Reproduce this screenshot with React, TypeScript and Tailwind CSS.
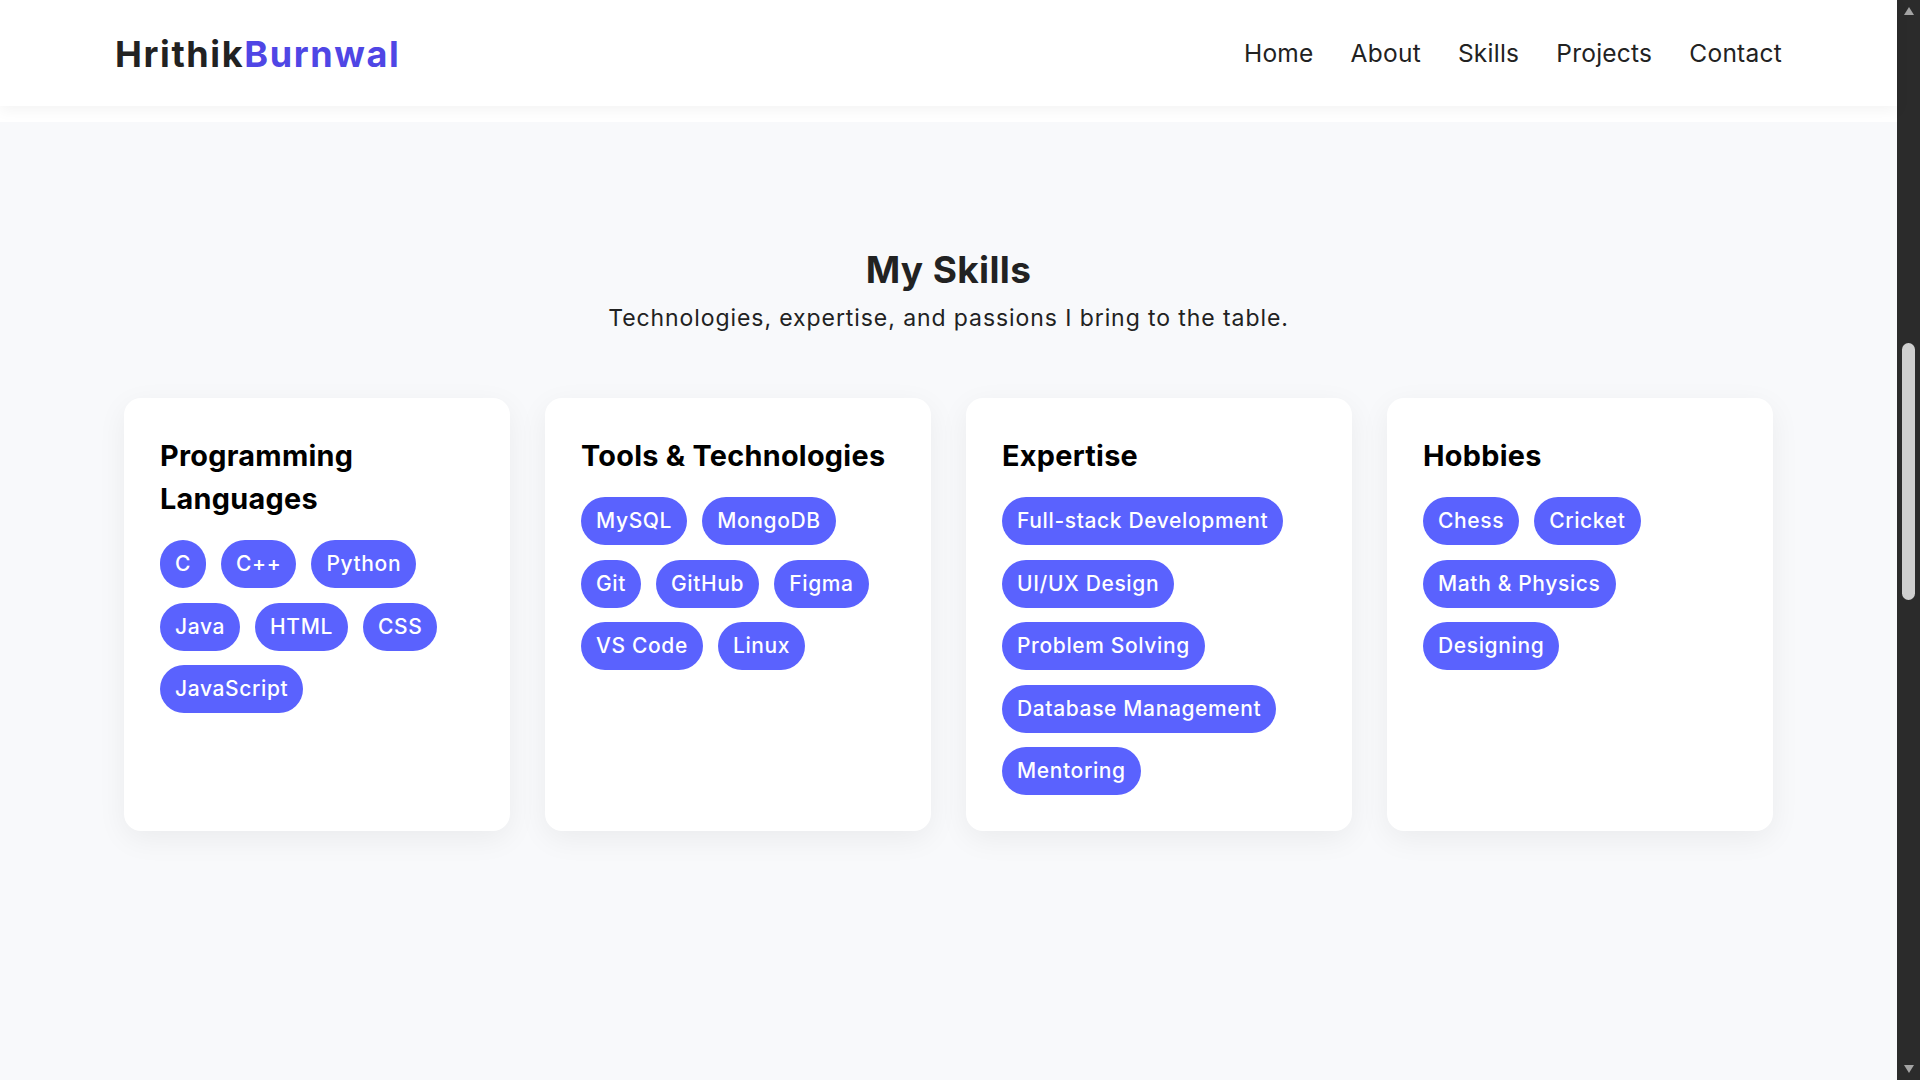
const skillGroups = [
  {
    title: "Programming Languages",
    rows: [["C", "C++", "Python"], ["Java", "HTML", "CSS"], ["JavaScript"]],
  },
  {
    title: "Tools & Technologies",
    rows: [["MySQL", "MongoDB"], ["Git", "GitHub", "Figma"], ["VS Code", "Linux"]],
  },
  {
    title: "Expertise",
    rows: [
      ["Full-stack Development"],
      ["UI/UX Design"],
      ["Problem Solving"],
      ["Database Management"],
      ["Mentoring"],
    ],
  },
  {
    title: "Hobbies",
    rows: [["Chess", "Cricket"], ["Math & Physics"], ["Designing"]],
  },
];

const navLinks = ["Home", "About", "Skills", "Projects", "Contact"];

function Header() {
  return (
    <header className="relative z-10 flex h-[106px] items-center justify-between bg-white px-[115px] pt-px shadow-[0_4px_14px_rgba(0,0,0,0.05)]">
      <a className="font-['Inter',sans-serif] text-[36px] font-bold tracking-[0.045em] text-[#222]" href="#">
        Hrithik<span className="text-[#4f46e5]">Burnwal</span>
      </a>
      <nav className="flex items-center gap-[37px] font-['Inter',sans-serif] text-[24.5px] tracking-[0.01em] text-[#222]">
        {navLinks.map((link) => (
          <a key={link} href="#">
            {link}
          </a>
        ))}
      </nav>
    </header>
  );
}

function SkillCard({ title, rows }: { title: string; rows: string[][] }) {
  return (
    <div className="rounded-[17px] bg-white p-9 shadow-[0_8px_30px_rgba(0,0,0,0.06)]">
      <h3 className="mb-5 font-['Inter',sans-serif] text-[28.8px] font-bold leading-[43px] tracking-[0.01em] text-black">
        {title}
      </h3>
      <div className="flex flex-col gap-y-[14.5px]">
        {rows.map((row, i) => (
          <div key={i} className="flex gap-x-[15px]">
            {row.map((tag) => (
              <span
                key={tag}
                className="flex h-12 items-center rounded-full bg-[#5a62fe] px-[15px] font-['Inter',sans-serif] text-[21px] font-medium tracking-[0.03em] text-white"
              >
                {tag}
              </span>
            ))}
          </div>
        ))}
      </div>
    </div>
  );
}

function Scrollbar() {
  return (
    <div className="flex w-[23px] shrink-0 flex-col items-center bg-[#2b2b2b]">
      <svg className="mt-[6px] h-[10px] w-[12px]" viewBox="0 0 12 10">
        <path d="M6 1 L11 9 L1 9 Z" fill="#a3a3a3" />
      </svg>
      <div className="mt-[327px] h-[257px] w-[13px] rounded-full bg-[#cfcfcf]" />
      <div className="flex-1" />
      <svg className="mb-[6px] h-[10px] w-[12px]" viewBox="0 0 12 10">
        <path d="M6 9 L11 1 L1 1 Z" fill="#a3a3a3" />
      </svg>
    </div>
  );
}

export default function App() {
  return (
    <div className="flex h-screen w-full overflow-hidden bg-white">
      <div className="flex min-w-0 flex-1 flex-col">
        <Header />
        <main className="mt-4 flex-1 bg-[#f8f9fb]">
          <section className="flex flex-col items-center pt-[126px]">
            <h2 className="font-['Inter',sans-serif] text-[37px] font-bold leading-[44px] tracking-[0.01em] text-[#222]">
              My Skills
            </h2>
            <p className="mt-[10px] font-['Inter',sans-serif] text-[23px] leading-8 tracking-[0.04em] text-[#222]">
              Technologies, expertise, and passions I bring to the table.
            </p>
            <div className="mt-[64px] grid w-[1649px] grid-cols-4 gap-[35px]">
              {skillGroups.map((group) => (
                <SkillCard key={group.title} title={group.title} rows={group.rows} />
              ))}
            </div>
          </section>
        </main>
      </div>
      <Scrollbar />
    </div>
  );
}
